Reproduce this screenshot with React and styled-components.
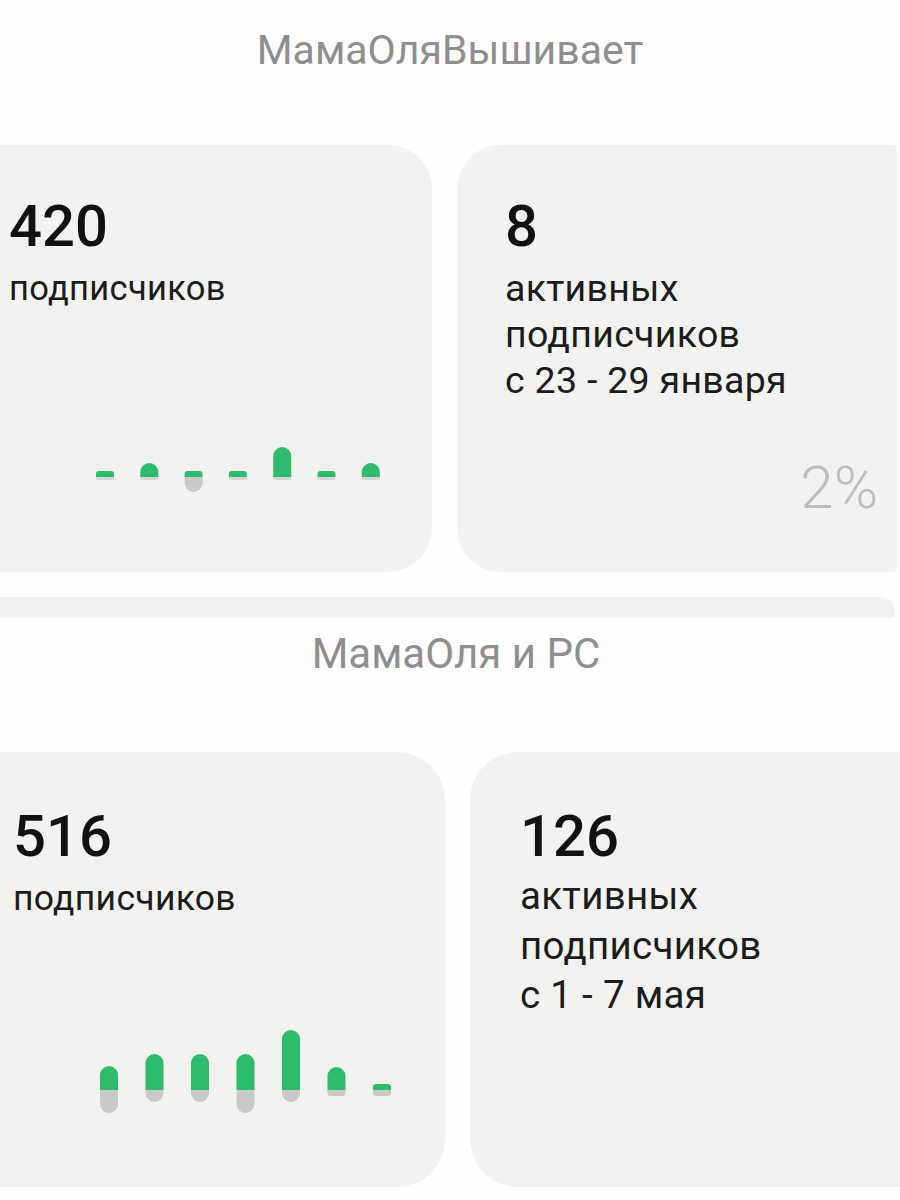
import React from 'react'
import styled, { createGlobalStyle } from 'styled-components'

const GlobalStyle = createGlobalStyle`
  html, body {
    margin: 0;
    padding: 0;
    background: #fefefe;
  }
  body {
    font-family: Roboto, "Noto Sans", sans-serif;
    overflow-x: hidden;
  }
`;

const Page = styled.div`
  width: 900px;
  overflow: hidden;
  padding-bottom: 13px;`;

const ChannelTitle = styled.h2`
  margin: ${p => p.top}px 0 0 ${p => p.shift || 0}px;
  font-size: ${p => p.size}px;
  line-height: ${p => p.size}px;
  font-weight: 400;
  color: #8e8e8e;
  text-align: center;`;

const CardRow = styled.div`
  display: grid;
  grid-template-columns: ${p => p.left}px ${p => p.right}px;
  column-gap: 25px;
  margin: ${p => p.top}px 0 0 -40px;`;

const Card = styled.div`
  display: flex;
  flex-direction: column;
  height: ${p => p.height}px;
  box-sizing: border-box;
  padding: ${p => p.padTop}px 0 0 ${p => p.padLeft}px;
  background: #f2f2f0;
  border-radius: ${p => p.radius};`;

const Count = styled.div`
  font-size: ${p => p.size || 58}px;
  line-height: ${p => p.size || 58}px;
  font-weight: 500;
  color: #111;`;

const Caption = styled.div`
  margin-top: ${p => p.gap}px;
  font-size: ${p => p.size}px;
  line-height: ${p => p.lead}px;
  letter-spacing: 0.3px;
  color: #1c1c1c;`;

const ChartWrap = styled.div`
  margin: ${p => p.top}px 0 0 87px;
  line-height: 0;`;

const Percent = styled.div`
  margin: auto 19px 54px auto;
  font-size: 60px;
  line-height: 60px;
  font-weight: 300;
  color: #bcbcbc;`;

const Strip = styled.div`
  margin: 25px 0 0 -40px;
  width: 935px;
  height: 21px;
  background: #f2f2f0;
  border-radius: 0 14px 4px 0;`;

const GREEN = '#2fbb6e';
const GREY = '#c9c9c9';

// green part sits on the baseline, grey part hangs below it
function topPill(x, base, w, h) {
  const r = h >= 12 ? w / 2 : h / 2;
  return `M${x} ${base} V${base - h + r} A${r} ${r} 0 0 1 ${x + r} ${base - h} H${x + w - r} A${r} ${r} 0 0 1 ${x + w} ${base - h + r} V${base} Z`;
}

function bottomPill(x, base, w, h) {
  const r = h >= 12 ? w / 2 : h / 2;
  return `M${x} ${base} V${base + h - r} A${r} ${r} 0 0 0 ${x + r} ${base + h} H${x + w - r} A${r} ${r} 0 0 0 ${x + w} ${base + h - r} V${base} Z`;
}

function Bars({ data, step, base, height }) {
  const w = 18;
  const width = step * (data.length - 1) + w + 2;
  return (
    <svg width={width} height={height} viewBox={`0 0 ${width} ${height}`}>
      {data.map((d, i) => {
        const x = i * step;
        return (
          <g key={i}>
            <path d={bottomPill(x, base, w, d.down)} fill={GREY} opacity={d.faint ? 0.7 : 1} />
            <path d={topPill(x, base, w, d.up)} fill={GREEN} />
          </g>
        );
      })}
    </svg>
  );
}

const weekOne = [
  { up: 6, down: 3, faint: true },
  { up: 14, down: 3, faint: true },
  { up: 6, down: 15 },
  { up: 6, down: 3, faint: true },
  { up: 30, down: 3, faint: true },
  { up: 6, down: 3, faint: true },
  { up: 14, down: 3, faint: true },
];

const weekTwo = [
  { up: 24, down: 23 },
  { up: 36, down: 12 },
  { up: 36, down: 12 },
  { up: 36, down: 23 },
  { up: 60, down: 12 },
  { up: 23, down: 6 },
  { up: 6, down: 6 },
];

export default function App() {
  return (
    <Page>
      <GlobalStyle />

      <ChannelTitle top={30} size={41}>МамаОляВышивает</ChannelTitle>

      <CardRow top={74} left={472} right={440}>
        <Card height={427} padTop={52} padLeft={49} radius="0 44px 44px 0">
          <Count>420</Count>
          <Caption gap={10} size={34.5} lead={46}>подписчиков</Caption>
          <ChartWrap top={132}>
            <Bars data={weekOne} step={44.3} base={34} height={52} />
          </ChartWrap>
        </Card>
        <Card height={427} padTop={52} padLeft={48} radius="44px 4px 4px 44px">
          <Count>8</Count>
          <Caption gap={10} size={37.5} lead={46}>
            активных<br />подписчиков<br />с 23 - 29 января
          </Caption>
          <Percent>2%</Percent>
        </Card>
      </CardRow>

      <Strip />

      <ChannelTitle top={15} size={42} shift={12}>МамаОля и PC</ChannelTitle>

      <CardRow top={77} left={485} right={470}>
        <Card height={435} padTop={55} padLeft={53} radius="0 48px 48px 0">
          <Count>516</Count>
          <Caption gap={10} size={35.5} lead={46}>подписчиков</Caption>
          <ChartWrap top={107}>
            <Bars data={weekTwo} step={45.5} base={62} height={87} />
          </ChartWrap>
        </Card>
        <Card height={435} padTop={55} padLeft={50} radius="48px 0 0 48px">
          <Count>126</Count>
          <Caption gap={6} size={38.5} lead={49.5}>
            активных<br />подписчиков<br />с 1 - 7 мая
          </Caption>
        </Card>
      </CardRow>
    </Page>
  );
}
